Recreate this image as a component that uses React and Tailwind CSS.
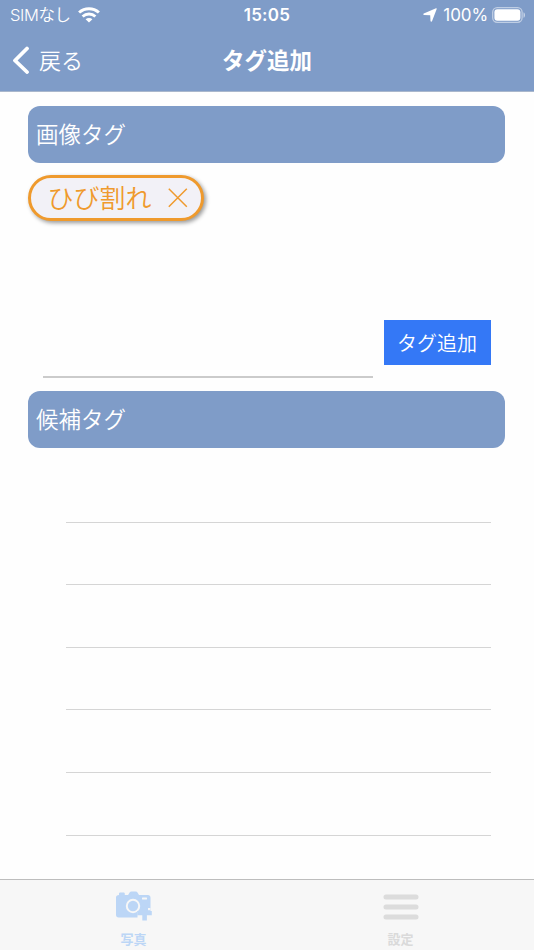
import React, { useState } from 'react';

const StatusBar = () => (
  <div className="grid h-[30px] grid-cols-3 items-center font-['Inter','Noto_Sans_CJK_JP',sans-serif] text-[17px] leading-none">
    <div className="flex items-center pl-[10px]">
      <span className="w-[61px] whitespace-nowrap text-[16.5px] font-[350] tracking-[-0.4px]">SIMなし</span>
      <svg className="ml-[7px] h-[16px] w-[22px]" viewBox="0 0 22 16" fill="none" stroke="currentColor">
        <path d="M1.1 5.5C6.8.4 15.2.4 20.9 5.5" strokeWidth="3" />
        <path d="M4.6 9.5c3.7-3.3 9.1-3.3 12.8 0" strokeWidth="3" />
        <path d="M11 15.6l-3.4-3.4c1.9-1.7 4.9-1.7 6.8 0z" fill="currentColor" stroke="none" />
      </svg>
    </div>
    <span className="text-center text-[17px] font-semibold tracking-[0.3px]">15:05</span>
    <div className="flex items-center justify-end pr-[8px]">
      <svg className="mr-[6px] h-[14px] w-[14px]" viewBox="0 0 14 14" fill="currentColor">
        <path d="M13 .3c.5-.2.9.1.7.6L9 13.2c-.3.7-1.4.6-1.5-.2L7.2 7.3 1 7C.2 6.9.1 5.9.8 5.6z" />
      </svg>
      <span className="mr-[4px] text-[17px] tracking-[-0.1px]">100%</span>
      <svg className="h-[17px] w-[34px]" viewBox="0 0 34 17" fill="none">
        <rect x=".7" y=".7" width="29.4" height="14.6" rx="4.5" stroke="currentColor" strokeWidth="1.3" opacity=".5" />
        <rect x="2.4" y="2.3" width="26" height="11.4" rx="3" fill="currentColor" />
        <path d="M31.5 5.2c2 .8 2 4.8 0 5.6z" fill="currentColor" opacity=".55" />
      </svg>
    </div>
  </div>
);

const NavBar = () => (
  <div className="grid h-[61px] grid-cols-3 items-center pb-[2px]">
    <button className="flex items-center pl-[12px] text-[22px] font-[350] leading-none">
      <svg className="mr-[9px] h-[28px] w-[18px]" viewBox="0 0 18 28" fill="none" stroke="currentColor" strokeWidth="3.8" strokeLinecap="round" strokeLinejoin="round">
        <path d="M15 2.5L3 14.5l12 11.5" />
      </svg>
      <span className="pb-[2px]">戻る</span>
    </button>
    <h1 className="text-center text-[22.5px] font-bold leading-none">タグ追加</h1>
  </div>
);

const SectionTitle = ({ children }) => (
  <h2 className="flex h-[57.5px] items-center rounded-[12px] bg-[#7f9cc8] pb-[3px] pl-[7.5px] text-[22.5px] font-[350] leading-none text-white">
    {children}
  </h2>
);

const Tag = ({ label, onRemove }) => (
  <div className="flex h-[46px] w-[176px] items-center rounded-full border-[3px] border-[#ef9a2d] bg-[#f2f1f7] pl-[16px] text-[26px] font-[350] leading-none text-[#ef9a2d] shadow-[2px_2px_4px_rgba(0,0,0,0.4)]">
    <span className="whitespace-nowrap pb-[1px]">{label}</span>
    <button onClick={onRemove} className="ml-[17px]">
      <svg className="h-[20px] w-[20px]" viewBox="0 0 20 20" fill="none" stroke="currentColor" strokeWidth="1.5">
        <path d="M.8.8l18 18M18.8.8l-18 18" />
      </svg>
    </button>
  </div>
);

const CameraIcon = () => (
  <svg className="h-[30px] w-[36px]" viewBox="0 0 36 30" fill="#bcd6f6">
    <path d="M3 4V2.8C3 2 3.6 1.5 4.3 1.5h3.2c.7 0 1.3.5 1.3 1.3V4h3.3l1.5-2.6C14 .7 14.6.4 15.3.4h4.5c.7 0 1.3.3 1.7 1L23 4h9c1.4 0 2.5 1.1 2.5 2.5V21H21.5v5.5h-19C1.1 26.500 0 25.400 0 24V6.500C0 5.100 1.100 4 3 4z" />
    <circle cx="17" cy="15" r="6.2" stroke="#f7f7f7" strokeWidth="2" />
    <rect x="26" y="6.5" width="5" height="2" rx=".5" fill="#f7f7f7" />
    <path d="M32 19.200V17h2.500v2.200z" fill="#f7f7f7" />
    <path d="M26.3 15.5h4.6v4.4h4.9v4.4h-4.900v5.200h-4.600v-5.200h-5v-4.400h5z" />
  </svg>
);

const MenuIcon = () => (
  <svg className="h-[30px] w-[36px]" viewBox="0 0 36 30" stroke="#dcdcdc" strokeWidth="5" strokeLinecap="round">
    <path d="M3 6h30M3 16h30M3 26h30" />
  </svg>
);

const TabBar = () => (
  <nav className="grid h-[71px] grid-cols-2 border-t border-[#bdbdbd] bg-[#f7f7f7] pt-[11px] text-[13px] font-bold leading-none">
    <button className="flex flex-col items-center gap-[11px] text-[#bcd6f6]">
      <CameraIcon />
      <span>写真</span>
    </button>
    <button className="flex flex-col items-center gap-[11px] text-[#dadada]">
      <MenuIcon />
      <span>設定</span>
    </button>
  </nav>
);

const App = () => {
  const [tags, setTags] = useState(['ひび割れ']);
  const [draft, setDraft] = useState('');

  const addTag = () => {
    if (!draft.trim()) return;
    setTags([...tags, draft.trim()]);
    setDraft('');
  };

  return (
    <div className="flex h-[950px] w-[534px] flex-col overflow-hidden bg-[#fefefe] font-['Noto_Sans_CJK_JP',sans-serif]">
      <header className="h-[92px] border-b border-[#a9b7cc] bg-[#7f9cc8] text-white">
        <StatusBar />
        <NavBar />
      </header>

      <main className="flex-1 pl-[28.4px] pr-[29px] pt-[13.6px]">
        <SectionTitle>画像タグ</SectionTitle>
        <div className="flex h-[156.5px] flex-wrap content-start gap-2 pt-[11.5px]">
          {tags.map((tag) => (
            <Tag key={tag} label={tag} onRemove={() => setTags(tags.filter((t) => t !== tag))} />
          ))}
        </div>

        {/* New tag input */}
        <div className="flex h-[71px] items-start gap-[11px] px-[14.5px] pt-[0.4px]">
          <input
            value={draft}
            onChange={(e) => setDraft(e.target.value)}
            className="h-[58px] w-[330px] border-b-2 border-[#cbcbcb] bg-transparent text-[20px] outline-none"
          />
          <button onClick={addTag} className="h-[45px] w-[107px] whitespace-nowrap bg-[#3478f6] pt-[1px] text-[20px] font-[350] leading-none text-white">
            タグ追加
          </button>
        </div>

        <SectionTitle>候補タグ</SectionTitle>
        <ul className="pl-[37.5px] pr-[14px] pt-[12px]">
          {[0, 1, 2, 3, 4, 5].map((row) => (
            <li key={row} className="h-[62.6px] border-b border-[#d5d5d5]" />
          ))}
        </ul>
      </main>

      <TabBar />
    </div>
  );
};

export default App;
